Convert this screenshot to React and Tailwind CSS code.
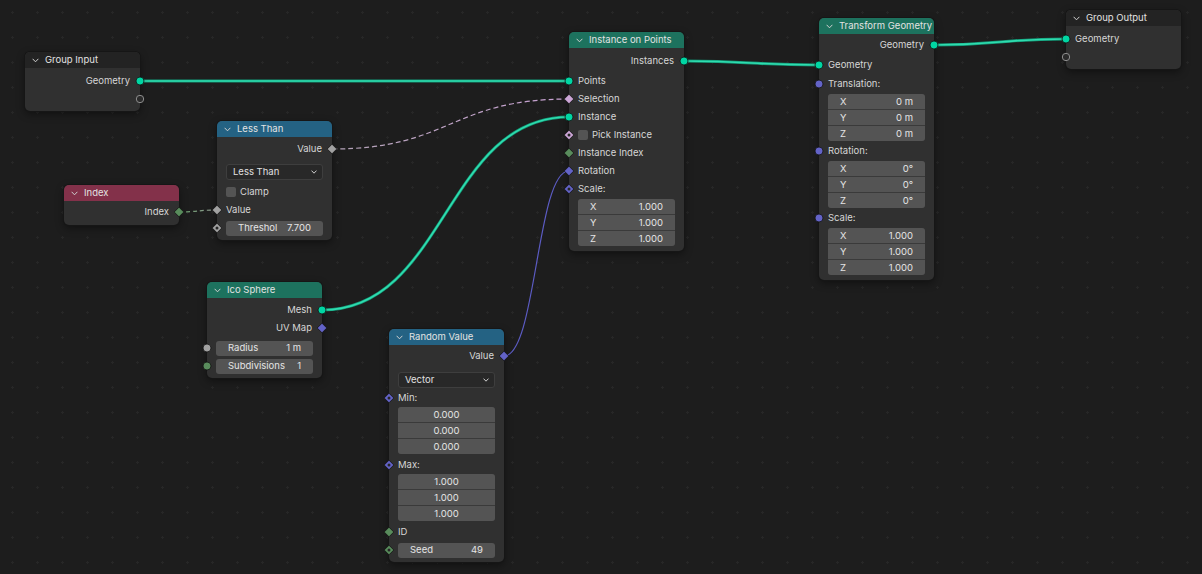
import React from 'react';

const C = {
  geo: '#00d6a3',
  vec: '#6363c7',
  int: '#598c5c',
  bool: '#cca6d6',
  float: '#a1a1a1',
};

const curve = (x1, y1, x2, y2) => {
  const d = Math.abs(x2 - x1) * 0.5;
  return `M${x1} ${y1} C${x1 + d} ${y1} ${x2 - d} ${y2} ${x2} ${y2}`;
};

function Socket({ s, c, side }) {
  const pos = side === 'left' ? 'left-[-6px]' : 'right-[-6px]';
  return (
    <svg width="12" height="12" viewBox="0 0 12 12" className={`absolute top-1/2 -translate-y-1/2 ${pos}`}>
      {s === 'circle' && <circle cx="6" cy="6" r="4" fill={c} stroke="#121212" strokeWidth="0.8" />}
      {s === 'empty' && <circle cx="6" cy="6" r="3.7" fill="#2b2b2b" stroke="#8e8e8e" strokeWidth="1" />}
      {(s === 'diamond' || s === 'dot') && (
        <path d="M6 1.2 L10.8 6 L6 10.8 L1.2 6 Z" fill={c} stroke="#121212" strokeWidth="0.8" />
      )}
      {s === 'dot' && <circle cx="6" cy="6" r="1.5" fill="#262626" />}
    </svg>
  );
}

function Node({ pos, title, head, children }) {
  return (
    <div className={`absolute w-[115px] rounded-[5px] bg-[#303030] shadow-[0_0_0_1px_#161616,0_3px_8px_rgba(0,0,0,0.45)] ${pos}`}>
      <div className={`flex h-[16px] items-center gap-[6px] rounded-t-[5px] pl-[7px] text-[#e2e2e2] ${head}`}>
        <svg width="7" height="5" viewBox="0 0 7 5">
          <path d="M0.6 0.8 L3.5 3.8 L6.4 0.8" fill="none" stroke="#cfcfcf" strokeWidth="1" />
        </svg>
        <span>{title}</span>
      </div>
      {children}
    </div>
  );
}

function Out({ label, s, c }) {
  return (
    <div className="relative flex h-[18px] items-center justify-end pr-[10px]">
      <span>{label}</span>
      <Socket s={s} c={c} side="right" />
    </div>
  );
}

function In({ label, s, c }) {
  return (
    <div className="relative flex h-[18px] items-center pl-[9px]">
      <span>{label}</span>
      <Socket s={s} c={c} side="left" />
    </div>
  );
}

function Field({ label, value, s, c }) {
  return (
    <div className="relative flex h-[18px] items-center px-[9px]">
      <div className="flex h-[15px] w-full items-center justify-between rounded-[3px] bg-[#545454] px-[12px] text-[#e4e4e4]">
        <span>{label}</span>
        <span>{value}</span>
      </div>
      <Socket s={s} c={c} side="left" />
    </div>
  );
}

function Vec({ labels, values }) {
  return (
    <div className="mx-[9px] flex flex-col gap-px overflow-hidden rounded-[3px] bg-[#3a3a3a] text-[#e4e4e4]">
      {values.map((v, i) => (
        <div
          key={i}
          className={`flex h-[15px] items-center bg-[#545454] px-[12px] ${labels ? 'justify-between' : 'justify-center'}`}
        >
          {labels && <span>{labels[i]}</span>}
          <span>{v}</span>
        </div>
      ))}
    </div>
  );
}

function Select({ value, h }) {
  return (
    <div className={`flex items-center px-[9px] ${h}`}>
      <div className="flex h-[16px] w-full items-center justify-between rounded-[3px] border border-[#3e3e3e] bg-[#282828] pl-[6px] pr-[5px] text-[#e0e0e0]">
        <span>{value}</span>
        <svg width="6" height="4" viewBox="0 0 6 4">
          <path d="M0.5 0.6 L3 3.2 L5.5 0.6" fill="none" stroke="#cfcfcf" strokeWidth="1" />
        </svg>
      </div>
    </div>
  );
}

function Check({ label, h, s, c }) {
  return (
    <div className={`relative flex items-center gap-[4px] pl-[9px] ${h}`}>
      <div className="h-[10px] w-[10px] rounded-[2px] bg-[#545454]" />
      <span>{label}</span>
      {s && <Socket s={s} c={c} side="left" />}
    </div>
  );
}

function Links() {
  const teal = (d) => (
    <g>
      <path d={d} fill="none" stroke="#139a78" strokeWidth="3" />
      <path d={d} fill="none" stroke="#2fdcaf" strokeWidth="1.6" />
    </g>
  );
  return (
    <svg className="absolute left-0 top-0" width="1202" height="574">
      <defs>
        <linearGradient id="sel" gradientUnits="userSpaceOnUse" x1="332" y1="0" x2="569" y2="0">
          <stop offset="0" stopColor="#b3a3b7" />
          <stop offset="1" stopColor="#c9a2d4" />
        </linearGradient>
        <linearGradient id="idx" gradientUnits="userSpaceOnUse" x1="179" y1="0" x2="217" y2="0">
          <stop offset="0" stopColor="#5f9462" />
          <stop offset="1" stopColor="#9aa39a" />
        </linearGradient>
      </defs>
      {teal('M140 81 L569 81')}
      {teal(curve(322, 310, 569, 117))}
      {teal(curve(684, 61, 819, 65))}
      {teal(curve(934, 45, 1066, 39))}
      <path d={curve(332, 149, 569, 99)} fill="none" stroke="url(#sel)" strokeWidth="1.2" strokeDasharray="5 3" />
      <path d={curve(179, 212, 217, 210)} fill="none" stroke="url(#idx)" strokeWidth="1.2" strokeDasharray="4 3" />
      <path d={curve(504, 356, 569, 171)} fill="none" stroke="#5c5cc4" strokeWidth="1.2" />
    </svg>
  );
}

export default function App() {
  return (
    <div className="relative h-[574px] w-full overflow-hidden bg-[#1d1d1d] bg-[radial-gradient(circle,#272727_1px,transparent_1.4px)] bg-size-[25px_25px] font-['Inter',sans-serif] text-[9.5px] leading-none text-[#d6d6d6]">
      <Links />

      <Node pos="left-[25px] top-[52px]" title="Group Input" head="bg-[#232323]">
        <div className="pb-[3px] pt-[4px]">
          <Out label="Geometry" s="circle" c={C.geo} />
          <Out s="empty" />
        </div>
      </Node>

      <Node pos="left-[217px] top-[121px]" title="Less Than" head="bg-[#246283]">
        <div className="pb-[3px] pt-[3px]">
          <Out label="Value" s="diamond" c={C.float} />
          <div className="h-[4px]" />
          <Select value="Less Than" h="h-[20px]" />
          <Check label="Clamp" h="h-[19px]" />
          <In label="Value" s="diamond" c={C.float} />
          <Field label="Threshol" value="7.700" s="dot" c={C.float} />
        </div>
      </Node>

      <Node pos="left-[64px] top-[185px]" title="Index" head="bg-[#83314a]">
        <div className="pb-[4px] pt-[2px]">
          <Out label="Index" s="diamond" c={C.int} />
        </div>
      </Node>

      <Node pos="left-[569px] top-[32px]" title="Instance on Points" head="bg-[#1d725e]">
        <div className="pb-[5px] pt-[4px]">
          <Out label="Instances" s="circle" c={C.geo} />
          <div className="h-[2px]" />
          <In label="Points" s="circle" c={C.geo} />
          <In label="Selection" s="diamond" c={C.bool} />
          <In label="Instance" s="circle" c={C.geo} />
          <Check label="Pick Instance" h="h-[18px]" s="dot" c={C.bool} />
          <In label="Instance Index" s="diamond" c={C.int} />
          <In label="Rotation" s="diamond" c={C.vec} />
          <In label="Scale:" s="dot" c={C.vec} />
          <div className="h-[1px]" />
          <Vec labels={['X', 'Y', 'Z']} values={['1.000', '1.000', '1.000']} />
        </div>
      </Node>

      <Node pos="left-[819px] top-[18px]" title="Transform Geometry" head="bg-[#1d725e]">
        <div className="pb-[5px] pt-[2px]">
          <Out label="Geometry" s="circle" c={C.geo} />
          <div className="h-[2px]" />
          <In label="Geometry" s="circle" c={C.geo} />
          <div className="h-[1px]" />
          <In label="Translation:" s="circle" c={C.vec} />
          <div className="h-[1px]" />
          <Vec labels={['X', 'Y', 'Z']} values={['0 m', '0 m', '0 m']} />
          <div className="h-[1px]" />
          <In label="Rotation:" s="circle" c={C.vec} />
          <div className="h-[1px]" />
          <Vec labels={['X', 'Y', 'Z']} values={['0°', '0°', '0°']} />
          <div className="h-[1px]" />
          <In label="Scale:" s="circle" c={C.vec} />
          <div className="h-[1px]" />
          <Vec labels={['X', 'Y', 'Z']} values={['1.000', '1.000', '1.000']} />
        </div>
      </Node>

      <Node pos="left-[1066px] top-[10px]" title="Group Output" head="bg-[#232323]">
        <div className="pb-[3px] pt-[4px]">
          <In label="Geometry" s="circle" c={C.geo} />
          <In s="empty" />
        </div>
      </Node>

      <Node pos="left-[207px] top-[282px]" title="Ico Sphere" head="bg-[#1d725e]">
        <div className="pb-[3px] pt-[3px]">
          <Out label="Mesh" s="circle" c={C.geo} />
          <Out label="UV Map" s="diamond" c={C.vec} />
          <div className="h-[2px]" />
          <Field label="Radius" value="1 m" s="circle" c={C.float} />
          <Field label="Subdivisions" value="1" s="circle" c={C.int} />
        </div>
      </Node>

      <Node pos="left-[389px] top-[329px]" title="Random Value" head="bg-[#246283]">
        <div className="pb-[3px] pt-[2px]">
          <Out label="Value" s="diamond" c={C.vec} />
          <div className="h-[6px]" />
          <Select value="Vector" h="h-[18px]" />
          <In label="Min:" s="dot" c={C.vec} />
          <Vec values={['0.000', '0.000', '0.000']} />
          <div className="h-[2px]" />
          <In label="Max:" s="dot" c={C.vec} />
          <Vec values={['1.000', '1.000', '1.000']} />
          <div className="h-[2px]" />
          <In label="ID" s="diamond" c={C.int} />
          <Field label="Seed" value="49" s="dot" c={C.int} />
        </div>
      </Node>
    </div>
  );
}
